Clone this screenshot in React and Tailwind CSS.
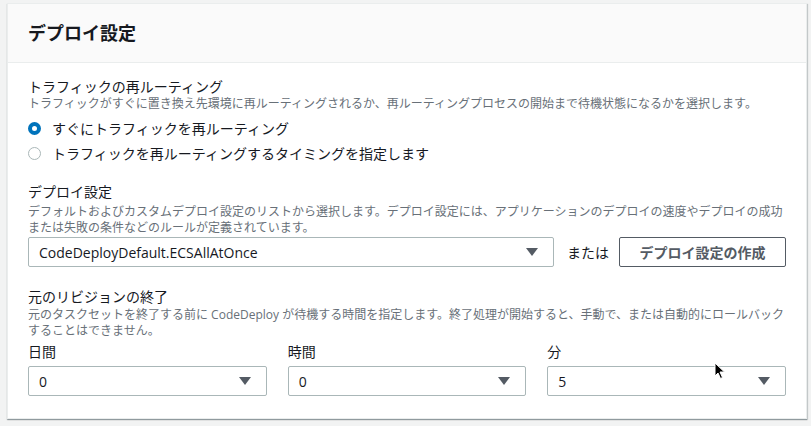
import React from 'react'

const Arrow = () => (
    <svg width="12" height="8" viewBox="0 0 12 8" className="shrink-0">
        <path d="M0 0 L12 0 L6 8 Z" fill="#545b64" />
    </svg>
)

const Select = ({ value, className = '' }) => (
    <div className={`flex h-[30px] items-center justify-between rounded-[2px] border border-[#aab7b8] bg-white pl-[10px] pr-[15px] text-[14px] text-[#16191f] ${className}`}>
        <span>{value}</span>
        <Arrow />
    </div>
)

const Radio = ({ checked, label }) => (
    <label className="flex h-[25px] items-center gap-[11px] text-[14px] text-[#16191f]">
        {checked ? (
            <span className="h-[13px] w-[13px] rounded-full border-[4px] border-[#0073bb] bg-white" />
        ) : (
            <span className="h-[13px] w-[13px] rounded-full border border-[#aab7b8] bg-white" />
        )}
        <span>{label}</span>
    </label>
)

const Cursor = () => (
    <svg className="absolute left-[714px] top-[362px]" width="12" height="18" viewBox="0 0 12 18">
        <path d="M1 1 L1 14 L4 11 L6.5 16.5 L8.5 15.5 L6 10 L10.5 10 Z" fill="#000" stroke="#fff" strokeWidth="1" />
    </svg>
)

const App = () => {
    return (
        <div
            className="relative h-[426px] w-[811px] bg-[#f2f3f3] pl-[7px] pt-[3px]"
            style={{ fontFamily: '"Open Sans", "Noto Sans CJK JP", sans-serif' }}
        >
            <section className="w-[800px] border border-[#eaeded] bg-white shadow-[0_1px_1px_0_rgba(0,28,36,0.3),1px_1px_1px_0_rgba(0,28,36,0.15)]">
                <div className="flex h-[59px] items-center border-b border-[#eaeded] bg-[#fafafa] px-[20px]">
                    <h2 className="text-[18px] font-bold text-[#16191f]">デプロイ設定</h2>
                </div>

                <div className="px-[20px] pb-[22px] pt-[15px]">
                    <div>
                        <div className="text-[14px] leading-[18px] text-[#16191f]">トラフィックの再ルーティング</div>
                        <div className="whitespace-nowrap text-[12px] leading-[16px] text-[#687078]">
                            トラフィックがすぐに置き換え先環境に再ルーティングされるか、再ルーティングプロセスの開始まで待機状態になるかを選択します。
                        </div>
                        <div className="mt-[4px]">
                            <Radio checked label="すぐにトラフィックを再ルーティング" />
                            <Radio label="トラフィックを再ルーティングするタイミングを指定します" />
                        </div>
                    </div>

                    <div className="mt-[17px]">
                        <div className="text-[14px] leading-[18px] text-[#16191f]">デプロイ設定</div>
                        <div className="mt-[3px] whitespace-nowrap text-[12px] leading-[16px] text-[#687078]">
                            デフォルトおよびカスタムデプロイ設定のリストから選択します。デプロイ設定には、アプリケーションのデプロイの速度やデプロイの成功
                            <br />
                            または失敗の条件などのルールが定義されています。
                        </div>
                        <div className="mt-[1px] flex items-center">
                            <Select value="CodeDeployDefault.ECSAllAtOnce" className="w-[526px]" />
                            <span className="ml-[13px] text-[14px] text-[#16191f]">または</span>
                            <button className="ml-[10px] h-[30px] flex-1 rounded-[2px] border border-[#545b64] bg-white text-[14px] font-bold text-[#545b64]">
                                デプロイ設定の作成
                            </button>
                        </div>
                    </div>

                    <div className="mt-[21px]">
                        <div className="text-[14px] leading-[18px] text-[#16191f]">元のリビジョンの終了</div>
                        <div className="mt-[1px] whitespace-nowrap text-[12px] leading-[16px] text-[#687078]">
                            元のタスクセットを終了する前に CodeDeploy が待機する時間を指定します。終了処理が開始すると、手動で、または自動的にロールバック
                            <br />
                            することはできません。
                        </div>
                        <div className="mt-[4px] grid grid-cols-3 gap-x-[21px]">
                            {[
                                ['日間', '0'],
                                ['時間', '0'],
                                ['分', '5'],
                            ].map(([label, value]) => (
                                <div key={label}>
                                    <div className="text-[14px] leading-[18px] text-[#16191f]">{label}</div>
                                    <Select value={value} className="mt-[5px]" />
                                </div>
                            ))}
                        </div>
                    </div>
                </div>
            </section>
            <Cursor />
        </div>
    )
}

export default App
